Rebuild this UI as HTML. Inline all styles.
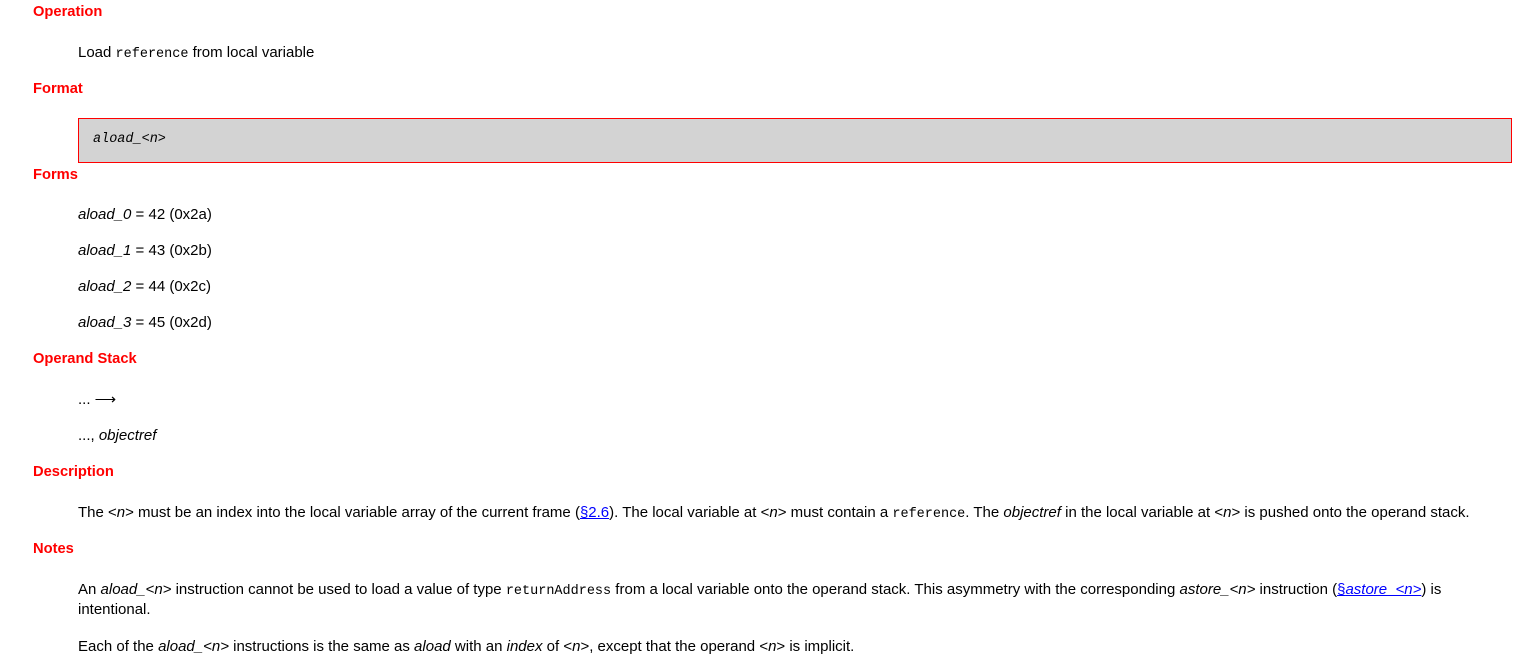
<!DOCTYPE html>
<html><head><meta charset="utf-8"><style>
body{margin:0;width:1532px;height:663px;background:#fff;font-family:"Liberation Sans",Arial,sans-serif;font-size:15px;color:#000;position:relative;overflow:hidden}
div.l{position:absolute;left:78px;line-height:20px;white-space:nowrap}
div.h{position:absolute;left:33px;line-height:20px;font-weight:bold;color:#f00;font-size:14.7px}
code{font-family:"Liberation Mono",monospace;font-size:13.5px}
a{color:#00f}
.box{position:absolute;left:78px;top:118px;width:1432px;height:43px;background:#d3d3d3;border:1px solid #f00}
.box span{position:absolute;left:14px;top:13px;font-family:"Liberation Mono",monospace;font-style:italic;font-size:13.5px}
</style></head><body>
<div class="h" style="top:2px">Operation</div>
<div class="l" style="top:43px">Load <code>reference</code> from local variable</div>
<div class="h" style="top:79px">Format</div>
<div class="box"><span>aload_&lt;n&gt;</span></div>
<div class="h" style="top:165px">Forms</div>
<div class="l" style="top:205px"><i>aload_0</i> = 42 (0x2a)</div>
<div class="l" style="top:241px"><i>aload_1</i> = 43 (0x2b)</div>
<div class="l" style="top:277px"><i>aload_2</i> = 44 (0x2c)</div>
<div class="l" style="top:313px"><i>aload_3</i> = 45 (0x2d)</div>
<div class="h" style="top:349px">Operand Stack</div>
<div class="l" style="top:390px">... ⟶</div>
<div class="l" style="top:426px">..., <i>objectref</i></div>
<div class="h" style="top:462px">Description</div>
<div class="l" style="top:503px">The &lt;<i>n</i>&gt; must be an index into the local variable array of the current frame (<a href="#">§2.6</a>). The local variable at &lt;<i>n</i>&gt; must contain a <code>reference</code>. The <i>objectref</i> in the local variable at &lt;<i>n</i>&gt; is pushed onto the operand stack.</div>
<div class="h" style="top:539px">Notes</div>
<div class="l" style="top:580px">An <i>aload_&lt;n&gt;</i> instruction cannot be used to load a value of type <code>returnAddress</code> from a local variable onto the operand stack. This asymmetry with the corresponding <i>astore_&lt;n&gt;</i> instruction (<a href="#">§<i>astore_&lt;n&gt;</i></a>) is</div>
<div class="l" style="top:600px">intentional.</div>
<div class="l" style="top:637px">Each of the <i>aload_&lt;n&gt;</i> instructions is the same as <i>aload</i> with an <i>index</i> of &lt;<i>n</i>&gt;, except that the operand &lt;<i>n</i>&gt; is implicit.</div>
</body></html>
